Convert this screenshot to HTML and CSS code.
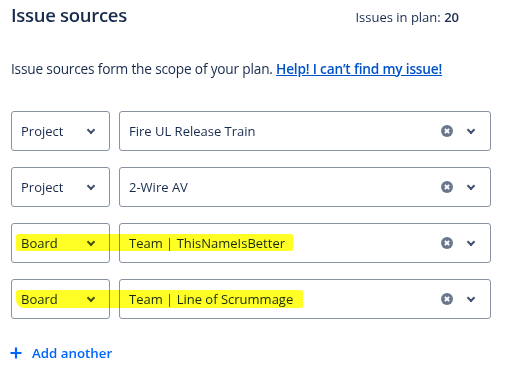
FILE: index.html
```html
<!DOCTYPE html>
<html lang="en">

<head>
    <meta charset="UTF-8">
    <meta name="viewport" content="width=device-width, initial-scale=1.0">
    <title>Issue sources</title>
    <link rel="stylesheet" href="styles.css">
</head>

<body>
    <div class="panel">
        <div class="header">
            <h2 class="title">Issue sources</h2>
            <span class="count">Issues in plan: <b>20</b></span>
        </div>
        <p class="desc">Issue sources form the scope of your plan. <a href="#" class="help">Help! I can’t find my issue!</a></p>

        <div class="sources">
            <div class="row">
                <div class="select"><span>Project</span><i class="chev"></i></div>
                <div class="picker">
                    <span class="value">Fire UL Release Train</span>
                    <i class="clear"></i><i class="chev"></i>
                </div>
            </div>
            <div class="row">
                <div class="select"><span>Project</span><i class="chev"></i></div>
                <div class="picker">
                    <span class="value">2-Wire AV</span>
                    <i class="clear"></i><i class="chev"></i>
                </div>
            </div>
            <div class="row">
                <div class="select"><span>Board</span><i class="chev"></i></div>
                <div class="picker">
                    <span class="value">Team <span class="pipe">|</span> ThisNameIsBetter</span>
                    <i class="clear"></i><i class="chev"></i>
                </div>
                <!-- marker highlight -->
                <div class="mark mark-one"></div>
            </div>
            <div class="row">
                <div class="select"><span>Board</span><i class="chev"></i></div>
                <div class="picker">
                    <span class="value">Team <span class="pipe">|</span> Line of Scrummage</span>
                    <i class="clear"></i><i class="chev"></i>
                </div>
                <div class="mark mark-two"></div>
            </div>
        </div>

        <a href="#" class="add">
            <svg class="plus" width="12" height="12" viewBox="0 0 12 12">
                <path d="M6 0.5v11M0.5 6h11" stroke="#0065ff" stroke-width="2.2" fill="none" />
            </svg>
            Add another
        </a>
    </div>
</body>

</html>
```

FILE: styles.css
```css
* {
    padding: 0;
    margin: 0;
    box-sizing: border-box;
}

body {
    font-family: "Open Sans", "Noto Sans", sans-serif;
    color: #172b4d;
    background: #fff;
}

.panel {
    width: 480px;
    margin-left: 11px;
    padding-top: 2px;
}

/* header */
.header {
    display: flex;
    align-items: baseline;
    justify-content: space-between;
    padding-right: 32px;
}

.title {
    font-size: 18.5px;
    font-weight: 600;
    letter-spacing: -0.3px;
}

.count {
    font-size: 13px;
}

.count b {
    font-weight: 600;
}

.desc {
    font-size: 13.7px;
    margin-top: 32px;
    letter-spacing: -0.2px;
}

.help {
    color: #0052cc;
    font-weight: 600;
}

/* rows */
.sources {
    margin-top: 33px;
    display: flex;
    flex-direction: column;
    gap: 16px;
}

.row {
    display: flex;
    gap: 9px;
    position: relative;
    height: 40px;
}

.select,
.picker {
    border: 1px solid #8993a4;
    border-radius: 3px;
    display: flex;
    align-items: center;
    font-size: 13px;
    position: relative;
    z-index: 1;
}

.select {
    width: 99px;
    padding-left: 9px;
}

.select span {
    flex: 1;
}

.select .chev {
    margin-right: 13px;
}

.picker {
    flex: 1;
    padding-left: 9px;
}

.picker .value {
    flex: 1;
}

.pipe {
    color: #0b5e8a;
}

.picker .chev {
    margin-right: 14px;
}

.chev {
    width: 10px;
    height: 8px;
    display: block;
    position: relative;
}

.chev::before {
    content: "";
    position: absolute;
    left: 2px;
    top: 0;
    width: 4px;
    height: 4px;
    border-right: 2px solid #42526e;
    border-bottom: 2px solid #42526e;
    transform: rotate(45deg);
}

.clear {
    width: 12px;
    height: 12px;
    border-radius: 50%;
    background: #6b778c;
    position: relative;
    margin-right: 13px;
    display: block;
}

.clear::before,
.clear::after {
    content: "";
    position: absolute;
    left: 3px;
    top: 5px;
    width: 6px;
    height: 2px;
    background: #fff;
    transform: rotate(45deg);
}

.clear::after {
    transform: rotate(-45deg);
}

/* yellow marker drawn over the rows */
.mark {
    position: absolute;
    background: rgba(255, 255, 0, 0.85);
    mix-blend-mode: multiply;
    z-index: 2;
    border-radius: 2px;
}

.mark-one {
    left: 5px;
    top: 11px;
    width: 277px;
    height: 17px;
}

.mark-two {
    left: 5px;
    top: 11px;
    width: 287px;
    height: 18px;
    border-radius: 2px 2px 2px 8px;
}

/* add */
.add {
    display: inline-flex;
    align-items: center;
    margin-top: 25px;
    color: #0065ff;
    text-decoration: none;
    font-size: 13.3px;
    font-weight: 600;
}

.plus {
    margin-right: 10px;
    margin-left: -1px;
}
```
